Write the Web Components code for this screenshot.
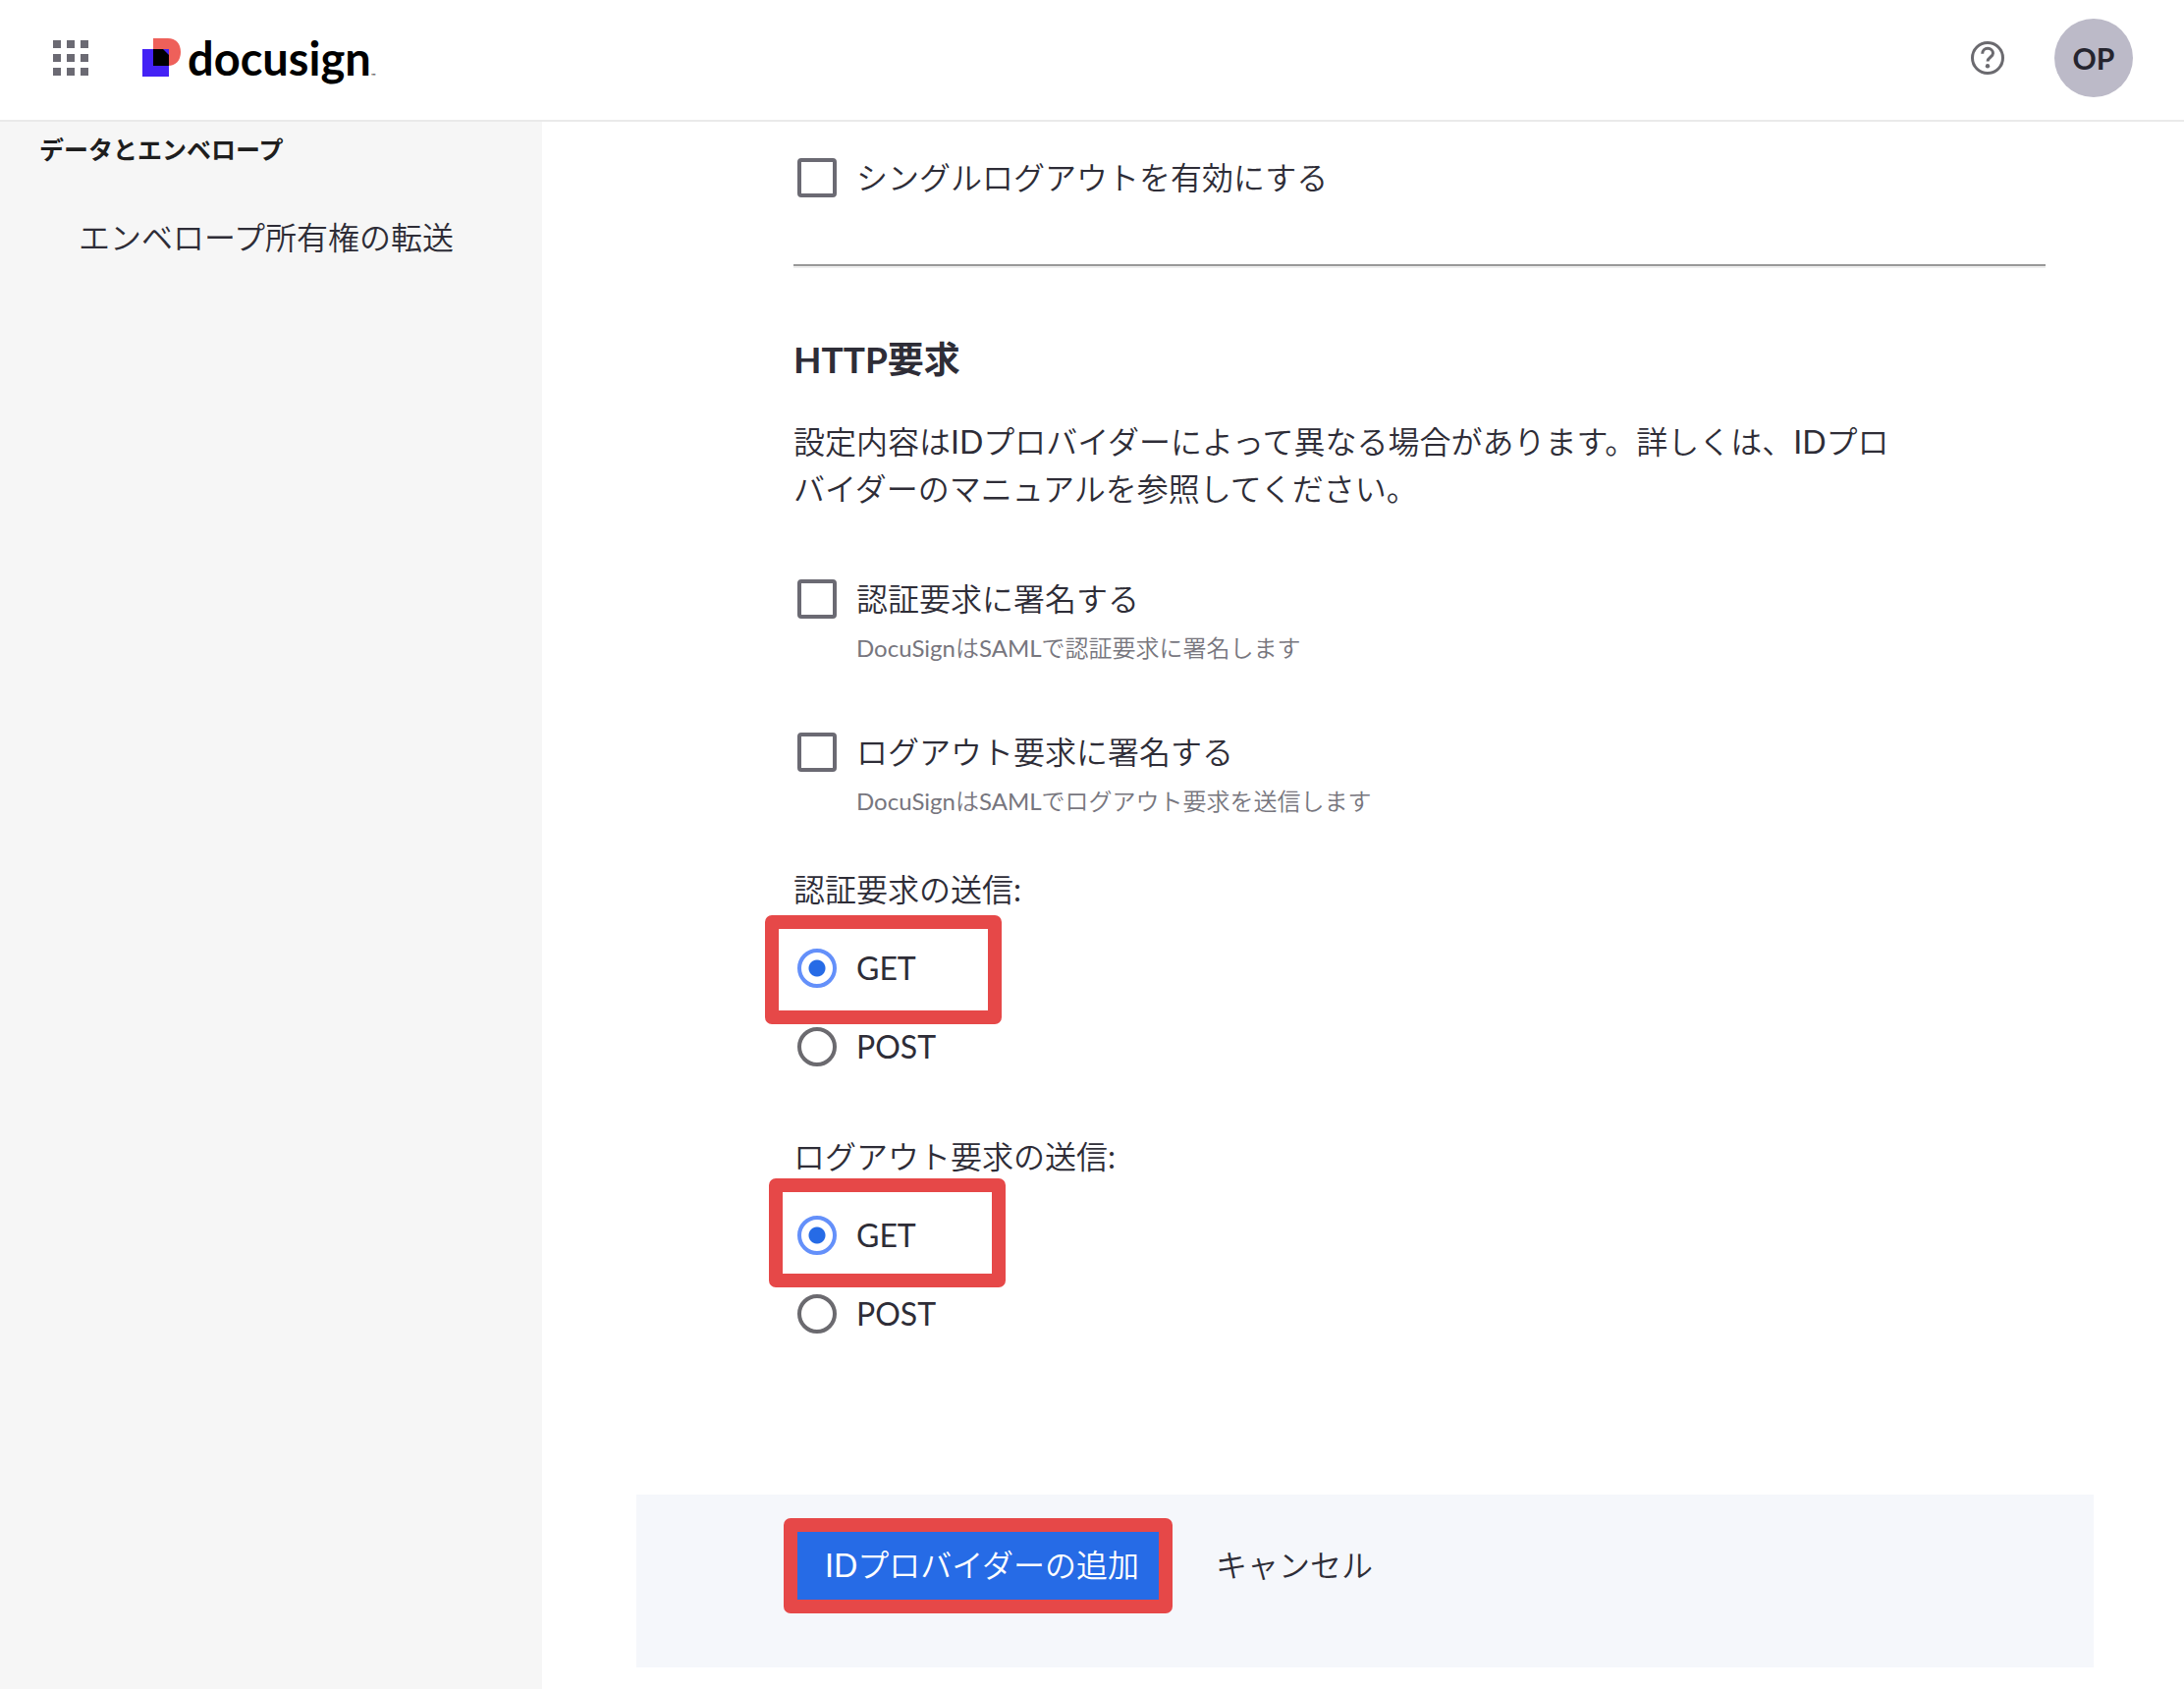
<!DOCTYPE html>
<html lang="ja">
<head>
<meta charset="utf-8">
<meta name="viewport" content="width=device-width, initial-scale=1">
<title>Docusign</title>
<style>
  body {
    margin: 0;
    background: #fff;
    color: #2e2d37;
    font: 32px/48px Lato, "Noto Sans CJK JP DemiLight", "Noto Sans CJK JP", sans-serif;
  }
</style>
</head>
<body>
<admin-page>
  <app-header slot="header" initials="OP"></app-header>
  <side-nav slot="nav" heading="データとエンベロープ">
    <a href="#transfer">エンベロープ所有権の転送</a>
  </side-nav>
  <check-option>シングルログアウトを有効にする</check-option>
  <form-section heading="HTTP要求">
    <span slot="intro">設定内容はIDプロバイダーによって異なる場合があります。詳しくは、IDプロバイダーのマニュアルを参照してください。</span>
    <check-option hint="DocuSignはSAMLで認証要求に署名します">認証要求に署名する</check-option>
    <check-option hint="DocuSignはSAMLでログアウト要求を送信します">ログアウト要求に署名する</check-option>
    <method-group name="auth" label="認証要求の送信:"></method-group>
    <method-group name="logout" label="ログアウト要求の送信:"></method-group>
  </form-section>
  <action-bar slot="footer" submit="IDプロバイダーの追加" cancel="キャンセル"></action-bar>
</admin-page>

<script>
class BaseElement extends HTMLElement {
  constructor() {
    super();
    this.attachShadow({ mode: "open" });
  }
  connectedCallback() {
    this.shadowRoot.innerHTML = `<style>${this.renderStyle()}</style>${this.render()}`;
  }
  attr(name) {
    return this.getAttribute(name) || "";
  }
}

class AdminPage extends BaseElement {
  render() {
    return `
      <slot name="header"></slot>
      <div class="body">
        <slot name="nav"></slot>
        <main>
          <div class="content"><slot></slot></div>
          <slot name="footer"></slot>
        </main>
      </div>
    `;
  }
  renderStyle() {
    return /* css */ `
      :host {
        display: flex;
        flex-direction: column;
        min-height: 100vh;
      }
      .body {
        display: flex;
        flex: 1;
      }
      main {
        flex: 1;
        min-width: 0;
        padding: 33px 92px 22px 96px;
      }
      .content {
        padding: 0 49px 144px 160px;
      }
    `;
  }
}

class AppHeader extends BaseElement {
  render() {
    return `
      <header>
        <button class="apps" aria-label="アプリ">
          <svg width="36" height="36" viewBox="0 0 36 36" fill="#6b6a73">
            <path d="M0 0h8v8H0zM14 0h8v8h-8zM28 0h8v8h-8zM0 14h8v8H0zM14 14h8v8h-8zM28 14h8v8h-8zM0 28h8v8H0zM14 28h8v8h-8zM28 28h8v8h-8z"/>
          </svg>
        </button>
        <a class="brand" href="#home">
          <svg width="40" height="40" viewBox="0 0 40 40">
            <path fill="#ee605a" d="M12 0h15c8 0 13 5.500 13 14s-5 14-13 14H12z"/>
            <path fill="#4422f5" d="M1 11h27v28H1z"/>
            <path fill="#000" d="M12 11h10l6 6v11H12z"/>
          </svg>
          <span class="name">docusign</span><span class="tm">™</span>
        </a>
        <button class="help" aria-label="ヘルプ">
          <svg width="34" height="34" viewBox="0 0 34 34" fill="none" stroke="#6b6a6f" stroke-width="3">
            <circle cx="17" cy="17" r="15.500"/>
            <path d="M11.700 12.800c0-3.200 2.300-5.500 5.400-5.500s5.400 2.200 5.400 5c0 4-5.400 4-5.400 8.200"/>
            <circle cx="17" cy="25.300" r="2.200" fill="#6b6a6f" stroke="none"/>
          </svg>
        </button>
        <button class="avatar">${this.attr("initials")}</button>
      </header>
    `;
  }
  renderStyle() {
    return /* css */ `
      :host {
        display: block;
      }
      header {
        display: flex;
        align-items: center;
        box-sizing: border-box;
        height: 124px;
        padding: 0 52px 4px 54px;
        border-bottom: 2px solid #eaeaea;
      }
      button {
        padding: 0;
        border: 0;
        background: none;
        font: inherit;
        color: inherit;
        cursor: pointer;
      }
      svg {
        display: block;
      }
      .brand {
        display: flex;
        align-items: center;
        margin-left: 54px;
        color: #000;
        text-decoration: none;
      }
      .name {
        margin-left: 7px;
        font-size: 47px;
        font-weight: 700;
      }
      .tm {
        align-self: flex-end;
        font-size: 6px;
        line-height: 12px;
      }
      .help {
        margin-left: auto;
      }
      .avatar {
        width: 80px;
        height: 80px;
        margin-left: 51px;
        border-radius: 50%;
        background: #bcbac8;
        color: #26252f;
        font-size: 30px;
        font-weight: 700;
      }
    `;
  }
}

class SideNav extends BaseElement {
  render() {
    return `
      <nav>
        <h2>${this.attr("heading")}</h2>
        <slot></slot>
      </nav>
    `;
  }
  renderStyle() {
    return /* css */ `
      :host {
        display: block;
        flex: none;
        width: 552px;
        background: #f6f6f6;
      }
      h2 {
        margin: 0 0 48px;
        padding: 10px 40px 0;
        color: #1e1e1e;
        font-family: Lato, "Noto Sans CJK JP", sans-serif;
        font-size: 25px;
        line-height: 36px;
      }
      ::slotted(a) {
        display: block;
        padding-left: 80px;
        color: #2e2d37;
        text-decoration: none;
      }
    `;
  }
}

class FormSection extends BaseElement {
  render() {
    return `
      <hr>
      <h1>${this.attr("heading")}</h1>
      <p><slot name="intro"></slot></p>
      <slot></slot>
    `;
  }
  renderStyle() {
    return /* css */ `
      :host {
        display: block;
      }
      hr {
        margin: 64px 0 69px;
        border: 0;
        border-top: 2px solid #999;
        border-bottom: 2px solid #eee;
      }
      h1 {
        margin: 0 0 36px;
        font-family: Lato, "Noto Sans CJK JP", sans-serif;
        font-size: 37px;
        line-height: 48px;
      }
      p {
        max-width: 1136px;
        margin: 0;
      }
      ::slotted(check-option) {
        margin-top: 64px;
      }
      ::slotted(method-group) {
        margin-top: 48px;
      }
    `;
  }
}

class CheckOption extends BaseElement {
  render() {
    const hint = this.attr("hint");
    return `
      <label>
        <input type="checkbox" ${hint ? `aria-describedby="hint"` : ""}>
        <slot></slot>
      </label>
      ${hint ? `<div class="hint" id="hint">${hint}</div>` : ""}
    `;
  }
  renderStyle() {
    return /* css */ `
      :host {
        display: block;
      }
      label {
        display: flex;
        align-items: center;
        gap: 20px;
        padding-left: 4px;
      }
      input {
        appearance: none;
        width: 40px;
        height: 40px;
        margin: 0;
        border: 4px solid #6b6a73;
        border-radius: 4px;
        background: #fff;
      }
      .hint {
        padding: 10px 0 2px 64px;
        color: #77767e;
        font-size: 24px;
        line-height: 32px;
      }
    `;
  }
}

// Red frame drawn over whatever it wraps
class HighlightBox extends BaseElement {
  render() {
    return `<slot></slot><div class="frame"></div>`;
  }
  renderStyle() {
    return /* css */ `
      :host {
        display: block;
        position: relative;
      }
      .frame {
        position: absolute;
        inset: var(--frame-inset);
        border: 14px solid #e64848;
        border-radius: 7px;
        pointer-events: none;
      }
    `;
  }
}

class MethodGroup extends BaseElement {
  render() {
    const name = this.attr("name");
    return `
      <fieldset>
        <legend>${this.attr("label")}</legend>
        <highlight-box class="${name}">
          <label><input type="radio" name="${name}" value="get" checked>GET</label>
        </highlight-box>
        <label><input type="radio" name="${name}" value="post">POST</label>
      </fieldset>
    `;
  }
  renderStyle() {
    return /* css */ `
      :host {
        display: block;
      }
      fieldset {
        margin: 0;
        padding: 0;
        border: 0;
      }
      legend {
        margin-bottom: 16px;
        padding: 0;
      }
      highlight-box {
        width: 212px;
      }
      .auth {
        --frame-inset: -14px 0 -17px -29px;
      }
      .logout {
        --frame-inset: -18px -4px -13px -25px;
      }
      label {
        display: flex;
        align-items: center;
        gap: 20px;
        height: 80px;
        padding-left: 4px;
      }
      input {
        appearance: none;
        width: 40px;
        height: 40px;
        margin: 0;
        border: 4px solid #6b6a6f;
        border-radius: 50%;
        background: #fff;
      }
      input:checked {
        border-color: #6490fa;
        background: radial-gradient(circle, #266be6 8px, #fff 9px);
      }
    `;
  }
}

class ActionBar extends BaseElement {
  render() {
    return `
      <highlight-box><button class="submit">${this.attr("submit")}</button></highlight-box>
      <button>${this.attr("cancel")}</button>
    `;
  }
  renderStyle() {
    return /* css */ `
      :host {
        display: flex;
        align-items: center;
        gap: 48px;
        padding: 34px 160px 66px;
        background: #f5f7fb;
      }
      highlight-box {
        --frame-inset: -10px -4px -11px -10px;
      }
      button {
        display: block;
        height: 76px;
        padding: 0;
        border: 0;
        background: none;
        color: inherit;
        font: inherit;
        cursor: pointer;
      }
      .submit {
        padding: 0 30px 0 32px;
        background: #266be6;
        color: #fff;
      }
    `;
  }
}

customElements.define("admin-page", AdminPage);
customElements.define("app-header", AppHeader);
customElements.define("side-nav", SideNav);
customElements.define("form-section", FormSection);
customElements.define("check-option", CheckOption);
customElements.define("highlight-box", HighlightBox);
customElements.define("method-group", MethodGroup);
customElements.define("action-bar", ActionBar);
</script>
</body>
</html>
